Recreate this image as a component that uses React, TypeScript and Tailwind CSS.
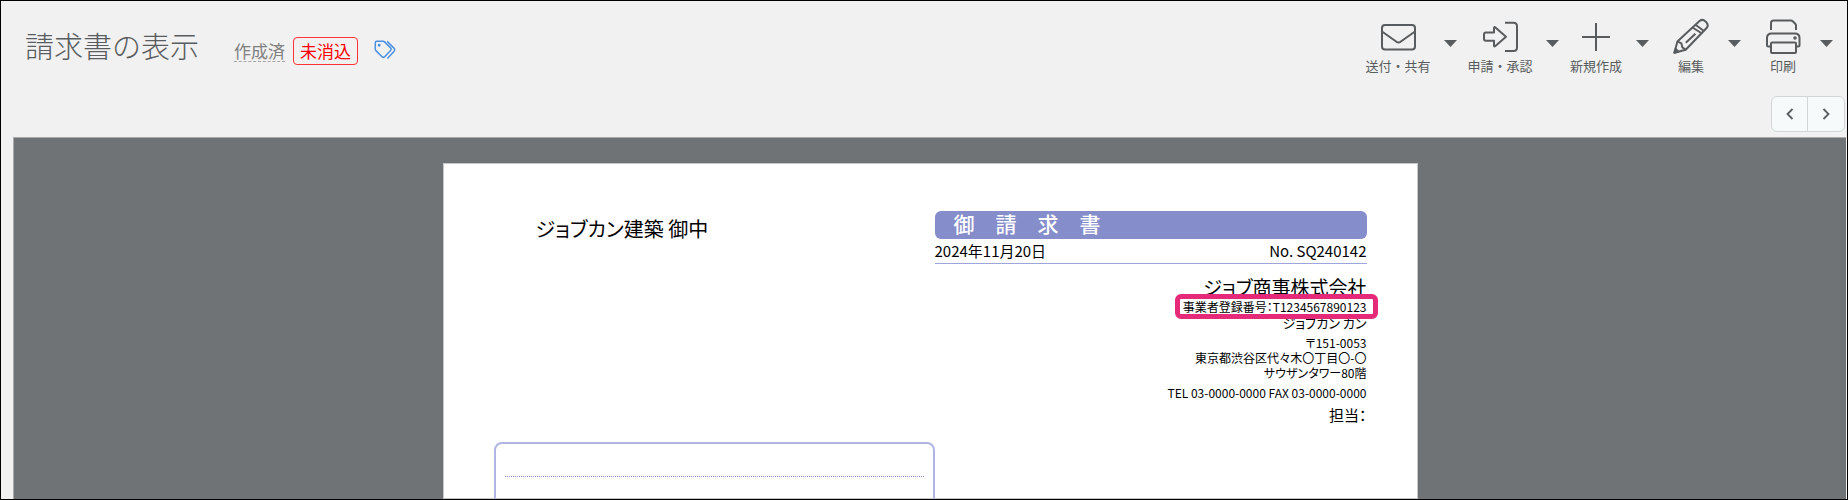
import React from 'react';

interface Tool {
  label: string;
  buttonClass: string;
  groupClass: string;
  icon: React.ReactNode;
}

const tools: Tool[] = [
  {
    label: '送付・共有',
    buttonClass: 'w-[76px]',
    groupClass: '',
    icon: (
      <>
        <rect x="2" y="7" width="33" height="24.5" rx="3" />
        <path d="M2 13.5l14.5 10.3q2 1.3 4 0L35 13.5" />
      </>
    ),
  },
  {
    label: '申請・承認',
    buttonClass: 'w-[76px]',
    groupClass: '',
    icon: (
      <>
        <path d="M2 16.5q0-2 2-2h8V10q0-1.5 1.4-.6L24 18.7 13.4 28q-1.4 1-1.4-.6v-4.6H4q-2 0-2-2z" />
        <path d="M23 4.7h8.5q3.5 0 3.5 3.5v21.3q0 3.5-3.5 3.5H23" />
      </>
    ),
  },
  {
    label: '新規作成',
    buttonClass: 'w-16',
    groupClass: '',
    icon: <path d="M18 5v28M4 19h28" />,
  },
  {
    label: '編集',
    buttonClass: 'w-[58px]',
    groupClass: 'ml-2',
    icon: (
      <>
        <path d="M1.4 34.8L4.4 23.4 26.5 3q3-2.4 6 .4l.6.6q3 3 .5 6L12.7 31.8z" />
        <path d="M4.4 23.4l4 2 1 4 3.3 2.4M19.5 9.5l9.500 6M22.500 6.800l8.800 6.400M12.800 24.800l9.600-9" />
        <path d="M1.4 34.8l1.2-4 2.8 2.8z" fill="currentColor" />
      </>
    ),
  },
  {
    label: '印刷',
    buttonClass: 'w-[58px]',
    groupClass: 'ml-2',
    icon: (
      <>
        <path d="M6 12V5q0-2.5 2.5-2.5H26q1 0 2 1l2 2q1 1 1 2V12" />
        <path d="M6 28.5H3.5Q2 28.5 2 27v-7q0-4.5 4.5-4.5H30q4.5 0 4.5 4.5v7q0 1.5-1.5 1.5h-2" />
        <rect x="6" y="24.5" width="25" height="10.5" rx="1" />
        <circle cx="30" cy="20" r="0.8" fill="currentColor" />
      </>
    ),
  },
];

const ToolButton: React.FC<{ tool: Tool }> = ({ tool }) => (
  <div className={`flex ${tool.groupClass}`}>
    <button type="button" className={`flex flex-col items-center gap-[5px] ${tool.buttonClass}`}>
      <svg
        className="h-9 w-9"
        viewBox="0 0 36 36"
        fill="none"
        stroke="currentColor"
        strokeWidth="2"
        strokeLinejoin="round"
        aria-hidden="true"
      >
        {tool.icon}
      </svg>
      <span className="whitespace-nowrap text-[13px] leading-[14px]">{tool.label}</span>
    </button>
    <button type="button" aria-label={`${tool.label}メニュー`} className="flex w-[26px] items-start pl-2 pt-[22px]">
      <svg className="h-[7px] w-[13px]" viewBox="0 0 13 7" fill="currentColor" aria-hidden="true">
        <path d="M0 0h13L6.5 7z" />
      </svg>
    </button>
  </div>
);

const TagsIcon = () => (
  <svg
    className="h-5 w-[22px]"
    viewBox="0 0 22 20"
    fill="none"
    stroke="currentColor"
    strokeWidth="1.5"
    strokeLinejoin="round"
    aria-hidden="true"
  >
    <path d="M1.3 2.8q0-1.5 1.5-1.5h6.4q.8 0 1.4.6l6 6q1.3 1.3 0 2.6l-6 6.2q-1.3 1.3-2.6 0L1.9 10.6q-.6-.6-.6-1.4z" />
    <path d="M13.2 1.3l6.7 6.8q1.5 1.7 0 3.4l-6.5 7" />
    <circle cx="5.2" cy="5.2" r="0.7" fill="currentColor" />
  </svg>
);

const Header = () => (
  <header className="text-[#595c5e]">
    <div className="flex items-start justify-between pl-6 pr-[9px]">
      <div className="flex items-end pt-[22px]">
        <h1 className="text-[29px] font-light leading-[44px]">請求書の表示</h1>
        <span className="mb-[5px] ml-[35px] border-b border-dashed border-[#a5a5a5] text-[17px] leading-5 text-[#808080]">
          作成済
        </span>
        <span className="mb-0.5 ml-2 rounded border border-[#ff3333] px-[6px] text-[17px] leading-[26px] text-[#ff0000]">
          未消込
        </span>
        <button type="button" aria-label="タグ" className="mb-[7px] ml-4 text-[#4a90e2]">
          <TagsIcon />
        </button>
      </div>
      <div className="flex pt-[17px]">
        {tools.map((tool) => (
          <ToolButton key={tool.label} tool={tool} />
        ))}
      </div>
    </div>
    <div className="mt-[23px] flex justify-end pr-0.5">
      <div className="flex h-9 divide-x divide-[#d3d5d6] rounded-md border border-[#d3d5d6] bg-[#f7fafb]">
        <button type="button" aria-label="前へ" className="flex w-9 items-center justify-center">
          <svg className="h-3 w-2" viewBox="0 0 8 12" fill="none" stroke="currentColor" strokeWidth="1.8">
            <path d="M6.5 1l-5 5 5 5" />
          </svg>
        </button>
        <button type="button" aria-label="次へ" className="flex w-9 items-center justify-center">
          <svg className="h-3 w-2" viewBox="0 0 8 12" fill="none" stroke="currentColor" strokeWidth="1.8">
            <path d="M1.5 1l5 5-5 5" />
          </svg>
        </button>
      </div>
    </div>
  </header>
);

const Issuer = () => (
  <div className="mt-2.5 flex flex-col items-end text-[12px] leading-[15px]">
    <p className="text-[19px] leading-[26px]">ジョブ商事株式会社</p>
    <div className="relative leading-[14px]">
      事業者登録番号：T1234567890123
      <span className="absolute -bottom-[5px] -left-2 -right-[11px] -top-1.5 rounded-md border-[5px] border-[#e42a78]" />
    </div>
    <p className="text-[13px] leading-[17px]">ジョブカン カン</p>
    <address className="mt-1 text-right not-italic">
      〒151-0053
      <br />
      東京都渋谷区代々木〇丁目〇-〇
      <br />
      サウザンタワー80階
    </address>
    <p className="mt-[5px]">TEL 03-0000-0000 FAX 03-0000-0000</p>
    <p className="mt-[5px] text-[15px] leading-5">担当：</p>
  </div>
);

const InvoiceSheet = () => (
  <article className="mx-auto h-full w-full max-w-[975px] border border-[#c4c6c7] bg-white px-[50px] pt-[47px] text-black [font-feature-settings:'palt']">
    <div className="flex">
      <p className="w-[441px] pl-[42px] text-[20px] leading-9">ジョブカン建築 御中</p>
      <div className="flex-1">
        <h2 className="rounded-md bg-[#868dcb] pb-1 pl-[19px] text-[21px] font-medium leading-6 text-white [font-feature-settings:normal]">
          御　請　求　書
        </h2>
        <div className="flex justify-between border-b border-[#9da5dd] text-[15px] leading-6">
          <time dateTime="2024-11-20">2024年11月20日</time>
          <span>No. SQ240142</span>
        </div>
        <Issuer />
      </div>
    </div>
    {/* subject / payment terms box */}
    <div className="mt-[17px] h-40 w-[441px] rounded-lg border-2 border-[#b0b5e3] px-[9px]">
      <div className="h-[33px] border-b border-dotted border-[#868dcb]" />
      <div className="h-8 border-b border-dotted border-[#868dcb]" />
    </div>
  </article>
);

export default function App() {
  return (
    <div className="flex h-screen flex-col overflow-hidden border border-black bg-[#f1f1f1] font-['Noto_Sans_CJK_JP',sans-serif]">
      <Header />
      <main className="ml-3 mr-px mt-[5px] min-h-0 flex-1 overflow-hidden border-l border-t border-[#a9abac] bg-[#6f7375] pt-[25px]">
        <InvoiceSheet />
      </main>
    </div>
  );
}
